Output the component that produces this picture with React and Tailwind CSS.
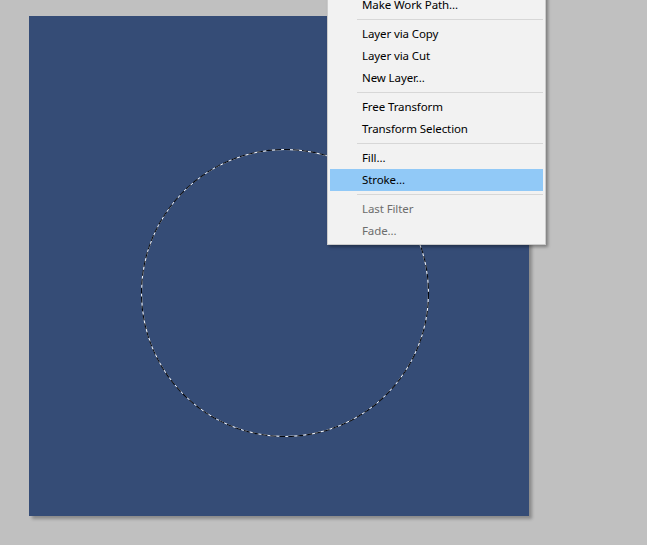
import React from "react";

const items = [
  { t: "Make Work Path..." },
  { sep: true },
  { t: "Layer via Copy" },
  { t: "Layer via Cut" },
  { t: "New Layer..." },
  { sep: true },
  { t: "Free Transform" },
  { t: "Transform Selection" },
  { sep: true },
  { t: "Fill..." },
  { t: "Stroke...", active: true },
  { sep: true },
  { t: "Last Filter", disabled: true },
  { t: "Fade...", disabled: true },
];

export default function App() {
  return (
    <div
      className="relative w-[647px] h-[545px] overflow-hidden bg-[#c0c0c0]"
      style={{ fontFamily: '"Noto Sans", "Liberation Sans", sans-serif' }}
    >
      <div className="pl-[29px] pt-[16px]">
        <div className="w-[500px] h-[500px] bg-[#354c76] shadow-[3px_3px_3px_rgba(0,0,0,0.28)]">
          <svg width="500" height="500" className="block">
            <circle cx="256" cy="277" r="143.5" fill="none" stroke="#ffffff" strokeWidth="1" />
            <circle
              cx="256"
              cy="277"
              r="143.5"
              fill="none"
              stroke="#05080f"
              strokeWidth="1.1"
              strokeDasharray="6 3"
            />
          </svg>
        </div>
      </div>

      <div className="absolute left-[327px] top-[-9px] w-[219px] border border-[#cccccc] bg-[#f2f2f2] p-[2px] shadow-[2px_2px_3px_rgba(0,0,0,0.35)]">
        {items.map((it, i) =>
          it.sep ? (
            <div key={i} className="h-[7px] flex items-center pl-[27px]">
              <div className="w-full h-[1px] bg-[#d7d7d7]" />
            </div>
          ) : (
            <div
              key={i}
              className={
                "h-[22px] flex items-center pl-[32px] text-[11.5px] tracking-[-0.1px] leading-none " +
                (it.active ? "bg-[#91c9f7] " : "") +
                (it.disabled ? "text-[#6d6d6d]" : "text-[#000000]")
              }
            >
              {it.t}
            </div>
          )
        )}
      </div>
    </div>
  );
}
